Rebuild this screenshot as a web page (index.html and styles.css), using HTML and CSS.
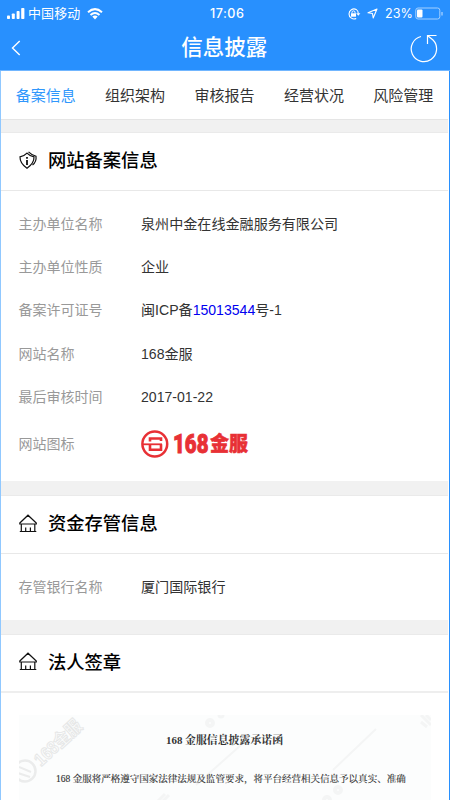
FILE: index.html
```html
<!DOCTYPE html>
<html lang="zh-CN">
<head>
<meta charset="utf-8">
<title>信息披露</title>
<link rel="stylesheet" href="styles.css">
</head>
<body>
<header class="top">
  <div class="status">
    <svg class="signal" width="19" height="12" viewBox="0 0 19 12" fill="#fff"><rect x="0" y="7.5" width="3" height="3.5" rx=".8"/><rect x="4.8" y="5.5" width="3" height="5.5" rx=".8"/><rect x="9.6" y="3" width="3" height="8" rx=".8"/><rect x="14.2" y="0" width="3.2" height="11" rx=".8"/></svg>
    <span class="carrier">中国移动</span>
    <svg class="wifi" width="16" height="12" viewBox="0 0 16 12" fill="none" stroke="#fff" stroke-width="2"><path d="M1 4.3Q8-2 15 4.3M3.5 7Q8 3 12.5 7"/><path d="M5.3 8.6Q8 6.5 10.7 8.6L8 11.5Z" fill="#fff" stroke="none"/></svg>
    <span class="clock">17:06</span>
    <div class="indicators">
      <svg width="14" height="12" viewBox="0 0 14 12" fill="none" stroke="#fff"><path d="M9.2 1.4A5 5 0 1 0 9.2 10.4M9.2 1.4A5 5 0 0 1 11.3 5.5" stroke-width="1.1"/><path d="M9.2 5.2h4.2l-2.1 2.5z" fill="#fff" stroke="none"/><rect x="4" y="5.3" width="5" height="3.4" fill="#fff" stroke="none"/><path d="M5 5.5V4.4a1.5 1.5 0 0 1 3 0v1.1"/></svg>
      <svg class="arrow" width="11" height="11" viewBox="0 0 11 11" fill="none" stroke="#fff" stroke-width="1.1" stroke-linejoin="round"><path d="M10 1L6.2 10 5.5 5.500 1 4.8Z"/></svg>
      <span class="percent">23%</span>
      <svg width="29" height="14" viewBox="0 0 29 14" fill="none" stroke="#a4d0ff"><rect x=".8" y="1" width="24" height="11" rx="2.2"/><rect x="2" y="2.5" width="5.5" height="8" rx="1" fill="#fff" stroke="none"/><path d="M27 5v3.5" stroke-width="1.3"/></svg>
    </div>
  </div>
  <div class="navbar">
    <svg width="10" height="16" viewBox="0 0 10 16" fill="none" stroke="#fff" stroke-width="1.4"><path d="M8.7 1L1.5 8l7.2 7"/></svg>
    <h1>信息披露</h1>
    <svg class="reload" width="28" height="29" viewBox="0 0 28 29" fill="none" stroke="#fff" stroke-width="1.2"><path d="M11 2.500A12.700 12.700 0 1 0 23 6L17.500 1.500M17.500 10V1.500h9"/></svg>
  </div>
</header>
<main>
  <nav class="tabs"><a class="active">备案信息</a><a>组织架构</a><a>审核报告</a><a>经营状况</a><a>风险管理</a></nav>
  <section class="record">
    <h2><svg width="19" height="19" viewBox="0 0 19 19" fill="none" stroke="#111" stroke-width="1.2"><path d="M8 2.200Q10.500 5 15 5.800C15.300 11.500 12 14.500 8 17.300C4 14.500.8 11.500 1 5.800Q5.500 5 8 2.200Z"/><path d="M9.500 .8Q12.500 3.800 17 5.300C17.500 9 16 12 13.500 14"/><path d="M8 9v5M8 6v1.800" stroke-width="1.8"/></svg>网站备案信息</h2>
    <dl>
      <div><dt>主办单位名称</dt><dd>泉州中金在线金融服务有限公司</dd></div>
      <div><dt>主办单位性质</dt><dd>企业</dd></div>
      <div><dt>备案许可证号</dt><dd>闽ICP备<a class="license">15013544</a>号-1</dd></div>
      <div><dt>网站名称</dt><dd>168金服</dd></div>
      <div><dt>最后审核时间</dt><dd>2017-01-22</dd></div>
      <div class="brand"><dt>网站图标</dt><dd>
        <svg width="110" height="30" viewBox="0 0 110 30"><g fill="none" stroke="#e83035"><circle cx="13.800" cy="15" r="12.4" stroke-width="2.5"/><path d="M1 15.3h20" stroke-width="1.8"/><path d="M20 12V9.500H9v3M9 15.300v5.500h11v-5.500" stroke-width="2.600"/></g><text class="brand-number" x="32" y="24" textLength="35.500" lengthAdjust="spacingAndGlyphs">168</text><text class="brand-name" x="69" y="22.300" textLength="38" lengthAdjust="spacingAndGlyphs">金服</text></svg>
      </dd></div>
    </dl>
  </section>
  <section class="custody">
    <h2><svg width="19" height="19" viewBox="0 0 19 19" fill="none" stroke="#111" stroke-width="1.2"><path d="M.8 9L9 1.2 17.3 9v1H.8zM2.3 10v7M15.8 10v7M.8 17.5h16.5M6.7 13.5v4M11.4 13.5v4"/></svg>资金存管信息</h2>
    <dl><div><dt>存管银行名称</dt><dd>厦门国际银行</dd></div></dl>
  </section>
  <section class="seal">
    <h2><svg width="19" height="19" viewBox="0 0 19 19" fill="none" stroke="#111" stroke-width="1.2"><path d="M.8 9L9 1.2 17.3 9v1H.8zM2.3 10v7M15.8 10v7M.8 17.5h16.5M6.7 13.5v4M11.4 13.5v4"/></svg>法人签章</h2>
    <div class="letter">
      <svg class="watermark" width="412" height="86" viewBox="0 0 412 86"><g fill="none" stroke="#ebecec"><circle cx="6" cy="56" r="10.5" stroke-width="2.5"/><path d="M0 52l12 5M-1 58l12 4" stroke-width="2"/></g><g fill="none" stroke="#f4f5f5" stroke-width="2"><path d="M177 70L222 30M314 55L357 14"/><circle cx="191" cy="8" r="3" stroke-width="4"/><circle cx="202" cy="0" r="2" stroke-width="3"/><circle cx="319" cy="75" r="3" stroke-width="4"/><circle cx="308" cy="85" r="3" stroke-width="4"/><path d="M402 0l10 10M407 0l5 5M402 7l6 5M139 86l7-7M144 86l6-6" stroke-width="3"/></g><text class="mark" transform="translate(22 52) rotate(-43)" textLength="58" lengthAdjust="spacingAndGlyphs">168金服</text></svg>
      <h3>168 金服信息披露承诺函</h3>
      <p>168 金服将严格遵守国家法律法规及监管要求，将平台经营相关信息予以真实、准确</p>
    </div>
  </section>
</main>
</body>
</html>
```

FILE: styles.css
```css
* { box-sizing: border-box; }
body {
  margin: 0;
  width: 450px;
  height: 800px;
  overflow: hidden;
  background: #fff;
  color: #333;
  font: 14.08px/20px "Liberation Sans", "Noto Sans CJK SC", sans-serif;
}
svg { display: block; flex: none; }
h1, h2, h3, p, dl, dd { margin: 0; }
.top { height: 71px; background: #2890fe; color: #fff; border-bottom: 1px solid #71b6ff; }
.status {
  display: grid;
  grid-template-columns: 21px 59px 123px 1fr auto;
  align-items: center;
  height: 26px;
  padding: 1px 6px 0 7px;
}
.carrier { font-size: 13px; letter-spacing: .1px; }
.clock { font: 500 12.6px/20px Inter, sans-serif; letter-spacing: .5px; }
.indicators { display: flex; align-items: center; }
.arrow { margin: 0 7px 0 6px; }
.percent { width: 29px; margin-right: 1px; font: 12.6px/20px Inter, sans-serif; white-space: nowrap; }
.navbar { display: grid; grid-template-columns: 28px 1fr 28px; align-items: center; height: 44px; padding: 0 12px 0 10.5px; text-align: center; }
h1 { font-size: 21.5px; font-weight: 500; line-height: 30px; }
main { height: 729px; border-left: 1px solid #90c8ff; border-right: 1px solid #2890fe; padding-right: 1px; background: #fff; }
.tabs { display: grid; grid-template-columns: repeat(5, 1fr); height: 49px; border-bottom: 1px solid #e5e5e5; line-height: 49px; text-align: center; font-size: 15px; }
.tabs .active { color: #3097fc; }
section { border-top: 13px solid #f1f1f1; background: #fff; }
.record { height: 361px; border-top-width: 12px; }
.custody { height: 139px; border-top-width: 14px; }
h2 { display: flex; align-items: center; gap: 10.5px; height: 59px; padding: 0 0 1px 17.5px; border-top: 1px solid #eaeaea; border-bottom: 1px solid #e8e8e8; color: #000; font-size: 18.3px; font-weight: 500; }
h2 svg { margin-bottom: 2px; }
dl { padding: 11px 18px 0 17.5px; }
dl div { display: grid; grid-template-columns: 122.5px 1fr; align-items: center; height: 43.4px; }
dt { color: #999; font-size: 14px; }
.license { color: #0000f0; }
dl .brand { height: 50px; }
.brand-number { fill: #e83035; stroke: #e83035; stroke-width: .9px; font: 900 25.5px Roboto, sans-serif; }
.brand-name { fill: #e83035; stroke: #e83035; stroke-width: .5px; font: 900 20px "Noto Sans CJK SC", sans-serif; }
.seal { border-top-width: 14px; }
.seal h2 { border-bottom: 2px solid #eee; }
.letter { position: relative; height: 86px; margin: 22px 0 0 18px; width: 412px; background: #fcfdfd; padding-top: 15px; font-family: "Liberation Serif", "Noto Serif CJK SC", "Noto Sans CJK SC", serif; overflow: hidden; }
.watermark { position: absolute; inset: 0; }
.mark { fill: #fcfdfd; stroke: #e6e7e7; stroke-width: 1px; font: bold 18px "Liberation Sans", "Noto Sans CJK SC", sans-serif; }
h3, p { position: relative; white-space: nowrap; color: #333; }
h3 { padding-left: 147px; font-size: 10.9px; line-height: 20px; font-weight: bold; }
p { padding-left: 37px; margin-top: 19px; font-size: 9.52px; line-height: 20px; -webkit-text-stroke: .15px #333; }
```
